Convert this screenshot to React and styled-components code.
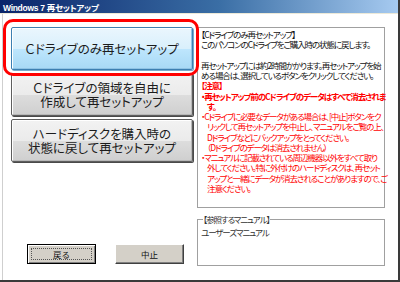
import React from "react";
import styled, { createGlobalStyle } from "styled-components";

const GlobalStyle = createGlobalStyle`
  html, body {
    margin: 0;
    padding: 0;
    background: #ffffff;
    overflow: hidden;
  }
`;

const jp = `"Noto Sans CJK JP", "Noto Sans", sans-serif`;

const Window = styled.div`
  width: 400px;
  height: 282px;
  box-sizing: border-box;
  display: flex;
  flex-direction: column;
  background: #ffffff;
  border-right: 2px solid #3a3a3a;
  border-bottom: 2px solid #3a3a3a;
  overflow: hidden;
`;

const TitleBar = styled.div`
  height: 13px;
  flex: none;
  display: flex;
  align-items: center;
  padding-left: 3px;
  background: linear-gradient(to right, #0a246a 0%, #3a6ea5 55%, #a6caf0 100%);
  color: #ffffff;
  font-family: "Liberation Sans", ${jp};
  font-weight: bold;
  font-size: 8.5px;
  letter-spacing: -0.3px;
  font-feature-settings: "palt";
  white-space: nowrap;
  border-bottom: 1px solid #ece9d8;
`;

const Body = styled.div`
  flex: 1;
  display: flex;
  margin-left: 2px;
  border-left: 1px solid #cfcfcf;
`;

const LeftPane = styled.div`
  width: 194px;
  flex: none;
  display: flex;
  flex-direction: column;
  padding: 13px 0 16px 8px;
  box-sizing: border-box;
`;

const ChoiceList = styled.div`
  position: relative;
  display: flex;
  flex-direction: column;
  gap: 3px;
  width: 182px;
`;

const Highlight = styled.div`
  position: absolute;
  top: -8px;
  left: -8px;
  width: 196px;
  height: 57px;
  box-sizing: border-box;
  border: 3.5px solid #ff0000;
  border-radius: 10px;
  pointer-events: none;
  z-index: 2;
`;

const ChoiceButton = styled.button`
  height: 43px;
  box-sizing: border-box;
  padding: 0;
  font-family: ${jp};
  font-size: 12.5px;
  color: #1c1c1c;
  text-align: center;
  font-feature-settings: "palt";
  border: 1px solid ${(p) => (p.$selected ? "#3c7fb1" : "#5e5e5e")};
  border-radius: 2px;
  box-shadow: inset 1px 1px 0 #ffffff, inset -1px -1px 0 ${(p) => (p.$selected ? "#8fc3e4" : "#b8b8b8")},
    1px 1px 0 ${(p) => (p.$selected ? "#7aa9c9" : "#4a4a4a")};
  background: ${(p) =>
    p.$selected
      ? "linear-gradient(to bottom, #eaf6fd 0%, #d9f0fc 50%, #bee6fd 51%, #a7d9f5 100%)"
      : "linear-gradient(to bottom, #f2f2f2 0%, #ebebeb 50%, #dddddd 51%, #cfcfcf 100%)"};
`;

const ChoiceLabel = styled.span`
  display: block;
  line-height: 13.5px;
`;

const ActionRow = styled.div`
  margin-top: auto;
  display: flex;
  gap: 19px;
  padding-left: 16px;
`;

const ActionButton = styled.button`
  width: 69px;
  height: 20px;
  box-sizing: border-box;
  padding: 0;
  background: #d4d0c8;
  font-family: ${jp};
  font-size: 8.5px;
  color: #111111;
  border: 1px solid;
  border-color: ${(p) => (p.$default ? "#000000" : "#ffffff #404040 #404040 #ffffff")};
  box-shadow: ${(p) =>
    p.$default
      ? "inset 1px 1px 0 #ffffff, inset -1px -1px 0 #808080"
      : "inset -1px -1px 0 #808080"};
  outline: ${(p) => (p.$default ? "1px dotted #555555" : "none")};
  outline-offset: -5px;
`;

const RightPane = styled.div`
  width: 188px;
  flex: none;
  display: flex;
  flex-direction: column;
  padding-top: 13px;
  gap: 6px;
`;

const InfoBox = styled.div`
  height: 181px;
  box-sizing: border-box;
  border: 1px solid #a0a0a0;
  padding: 1px 0 0 3px;
  font-family: ${jp};
  font-size: 8.5px;
  line-height: 10.25px;
  font-feature-settings: "palt";
  letter-spacing: -1.1px;
  color: #111111;
  white-space: nowrap;
`;

const Line = styled.div`
  height: 10.25px;
  padding-left: ${(p) => (p.$indent ? "6px" : "0")};
  color: ${(p) => (p.$warn ? "#ff0000" : "inherit")};
  font-weight: ${(p) => (p.$bold ? 700 : 400)};
`;

const ManualBox = styled.fieldset`
  margin: 0;
  height: 52px;
  box-sizing: border-box;
  border: 1px solid #a0a0a0;
  padding: 0 3px;
  font-family: ${jp};
  font-size: 8.5px;
  line-height: 10px;
  font-feature-settings: "palt";
  letter-spacing: -1.1px;
  color: #333333;

  legend {
    padding: 0;
    margin-left: 2px;
    line-height: 10px;
  }
`;

const ManualName = styled.div`
  margin-top: 3px;
`;

const notes = [
  { text: "【Cドライブのみ再セットアップ】" },
  { text: "このパソコンのCドライブをご購入時の状態に戻します。" },
  { text: "" },
  { text: "再セットアップには約2時間かかります。再セットアップを始" },
  { text: "める場合は、選択しているボタンをクリックしてください。" },
  { text: "【注意】", warn: true, bold: true },
  { text: "・再セットアップ前のCドライブのデータはすべて消去されま", warn: true, bold: true },
  { text: "す。", warn: true, bold: true, indent: true },
  { text: "・Cドライブに必要なデータがある場合は、[中止]ボタンをク", warn: true },
  { text: "リックして再セットアップを中止し、マニュアルをご覧の上、", warn: true, indent: true },
  { text: "Dドライブなどにバックアップをとってください。", warn: true, indent: true },
  { text: "（Dドライブのデータは消去されません）", warn: true, indent: true },
  { text: "・マニュアルに記載されている周辺機器以外をすべて取り", warn: true },
  { text: "外してください。特に外付けのハードディスクは、再セット", warn: true, indent: true },
  { text: "アップと一緒にデータが消去されることがありますので、ご", warn: true, indent: true },
  { text: "注意ください。", warn: true, indent: true },
];

const choices = [
  { lines: ["Ｃドライブのみ再セットアップ"], selected: true },
  { lines: ["Ｃドライブの領域を自由に", "作成して再セットアップ"] },
  { lines: ["ハードディスクを購入時の", "状態に戻して再セットアップ"] },
];

export default function App() {
  return (
    <>
      <GlobalStyle />
      <Window>
        <TitleBar>Windows 7 再セットアップ</TitleBar>
        <Body>
          <LeftPane>
            <ChoiceList>
              <Highlight />
              {choices.map((c, i) => (
                <ChoiceButton key={i} $selected={c.selected}>
                  {c.lines.map((l) => (
                    <ChoiceLabel key={l}>{l}</ChoiceLabel>
                  ))}
                </ChoiceButton>
              ))}
            </ChoiceList>
            <ActionRow>
              <ActionButton $default>戻る</ActionButton>
              <ActionButton>中止</ActionButton>
            </ActionRow>
          </LeftPane>
          <RightPane>
            <InfoBox>
              {notes.map((n, i) => (
                <Line key={i} $warn={n.warn} $bold={n.bold} $indent={n.indent}>
                  {n.text}
                </Line>
              ))}
            </InfoBox>
            <ManualBox>
              <legend>【参照するマニュアル】</legend>
              <ManualName>ユーザーズマニュアル</ManualName>
            </ManualBox>
          </RightPane>
        </Body>
      </Window>
    </>
  );
}
